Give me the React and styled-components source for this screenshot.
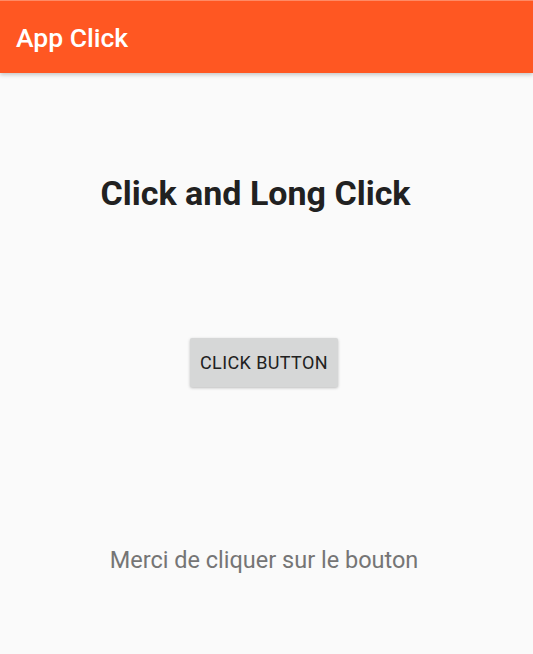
import React from "react";
import styled, { createGlobalStyle } from "styled-components";

const Global = createGlobalStyle`
  html, body { margin: 0; padding: 0; background: #fafafa; }
  body { font-family: Roboto, "Noto Sans", sans-serif; }
`;

const Screen = styled.div`
  width: 533px;
  height: 654px;
  display: flex;
  flex-direction: column;
  background: #fafafa;
  overflow: hidden;
`;

const AppBar = styled.header`
  height: 73px;
  box-sizing: border-box;
  border-top: 1px solid #ff8a65;
  background: #ff5722;
  display: flex;
  align-items: center;
  padding: 0 16px 0;
  box-shadow: 0 2px 4px rgba(0, 0, 0, 0.2);
  position: relative;
  z-index: 1;
`;

const Title = styled.h1`
  margin: 0;
  color: #ffffff;
  font-size: 26.5px;
  font-weight: 500;
`;

const Content = styled.main`
  display: flex;
  flex-direction: column;
  align-items: center;
`;

const Heading = styled.h2`
  margin: 100px 22px 0 0;
  font-size: 34px;
  line-height: 40px;
  font-weight: 700;
  color: #212121;
`;

const Button = styled.button`
  margin-top: 125px;
  height: 49px;
  padding: 0 10px;
  border: none;
  border-radius: 2px;
  background: #d6d7d7;
  color: #212121;
  font-family: Roboto, sans-serif;
  font-size: 18px;
  font-weight: 400;
  letter-spacing: 0.4px;
  box-shadow: 0 1px 3px rgba(0, 0, 0, 0.25);
  margin-right: 5px;
`;

const Message = styled.p`
  margin: 159px 5px 0 0;
  font-size: 23.5px;
  line-height: 28px;
  color: #757575;
`;

export default function App() {
  return (
    <Screen>
      <Global />
      <AppBar>
        <Title>App Click</Title>
      </AppBar>
      <Content>
        <Heading>Click and Long Click</Heading>
        <Button>CLICK BUTTON</Button>
        <Message>Merci de cliquer sur le bouton</Message>
      </Content>
    </Screen>
  );
}
